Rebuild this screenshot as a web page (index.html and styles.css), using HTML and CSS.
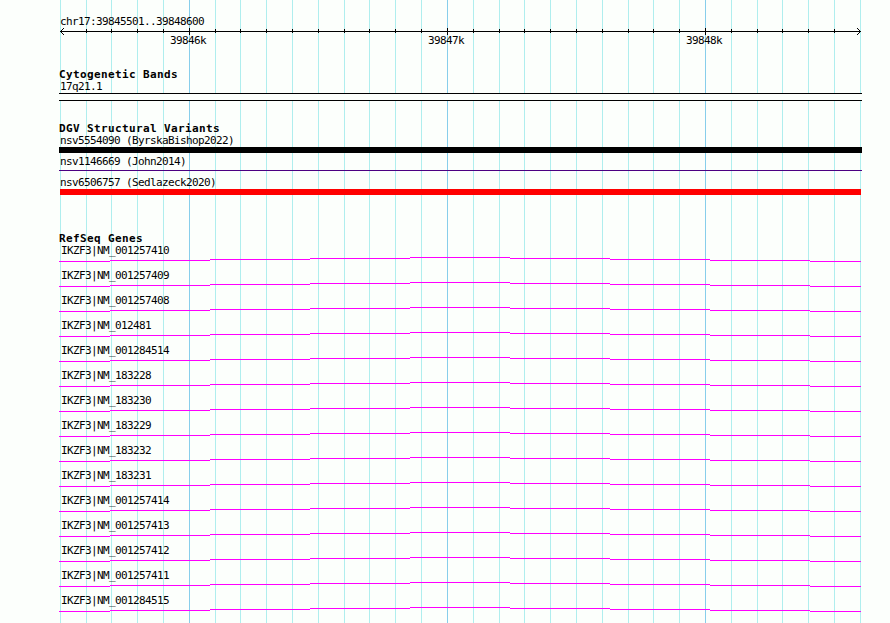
FILE: index.html
```html
<!DOCTYPE html>
<html lang="en">
<head>
<meta charset="UTF-8" />
<title>chr17:39845501..39848600</title>
<link rel="stylesheet" href="styles.css">
</head>
<body>

<svg class="grid" id="grid" width="890" height="623"></svg>

<main class="browser">
  <header class="ruler">
    <div class="label">chr17:39845501..39848600</div>
    <svg class="axis" id="axis" width="831" height="20"></svg>
  </header>

  <section class="track cytoband">
    <h2>Cytogenetic Bands</h2>
    <div class="label">17q21.1</div>
    <div class="band"></div>
  </section>

  <section class="track variants">
    <h2>DGV Structural Variants</h2>
    <div class="variant">
      <div class="label">nsv5554090 (ByrskaBishop2022)</div>
      <div class="bar black"></div>
    </div>
    <div class="variant">
      <div class="label">nsv1146669 (John2014)</div>
      <div class="bar thin"></div>
    </div>
    <div class="variant">
      <div class="label">nsv6506757 (Sedlazeck2020)</div>
      <div class="bar red"></div>
    </div>
  </section>

  <section class="track">
    <h2>RefSeq Genes</h2>
    <div id="genes"></div>
  </section>
</main>

<script>
  const genes = [
    'NM_001257410', 'NM_001257409', 'NM_001257408', 'NM_012481', 'NM_001284514',
    'NM_183228', 'NM_183230', 'NM_183229', 'NM_183232', 'NM_183231',
    'NM_001257414', 'NM_001257413', 'NM_001257412', 'NM_001257411', 'NM_001284515'
  ];
  const majors = { 5: '39846k', 15: '39847k', 25: '39848k' };

  // one line every 100 bp
  let grid = '';
  let axis = '<path class="ink" d="M1 4h801v1H1z"/>';
  for (let i = 0; i <= 31; i++) {
    const x = Math.floor(60.3 + i * 800 / 31);
    const major = majors[i];
    grid += `<rect class="${major ? 'major' : 'minor'}" x="${x}" y="0" width="1" height="623"/>`;
    if (major) {
      axis += `<rect class="ink" x="${x - 59}" y="1" width="1" height="7"/>`;
      axis += `<text class="tick-label" x="${x - 78}" y="17">${major}</text>`;
    } else if (i > 0 && i < 31) {
      axis += `<rect class="ink" x="${x - 59}" y="2" width="1" height="4"/>`;
    }
  }
  // arrow heads
  for (let i = 1; i <= 3; i++) {
    [4 - i, 4 + i].forEach(y => {
      axis += `<rect class="ink" x="${1 + i}" y="${y}" width="1" height="1"/>`;
      axis += `<rect class="ink" x="${801 - i}" y="${y}" width="1" height="1"/>`;
    });
  }
  document.getElementById('grid').innerHTML = grid;
  document.getElementById('axis').innerHTML = axis;

  // intron line rises to the middle and falls again
  const intron = `<svg class="intron" width="803" height="6">
    <path d="M0 5.5H51M51 4.5H151M151 3.5H251M251 2.5H351M351 1.5H451M451 2.5H551M551 3.5H651M651 4.5H751M751 5.5H802"/>
  </svg>`;
  document.getElementById('genes').innerHTML = genes.map(id => `
    <div class="gene">
      <div class="label">IKZF3|${id}</div>
      ${intron}
    </div>`).join('');
</script>

</body>
</html>
```
FILE: styles.css
```css
body {
  margin: 0;
  height: 623px;
  overflow: hidden;
  background-color: #fcfffc;
  color: #000;
  font-family: 'DejaVu Sans Mono', monospace;
  font-size: 11px;
  line-height: 14px;
}

/* guide lines run behind all the tracks */
.grid {
  position: absolute;
  top: 0;
  left: 0;
  z-index: -1;
  shape-rendering: crispEdges;
}

.minor {
  fill: #afeeee;
}

.major {
  fill: #87ceeb;
}

.browser {
  padding: 15px 0 0 59px;
}

.label {
  height: 12px;
  padding-left: 1px;
  letter-spacing: -0.622px;
  white-space: pre;
}

.ruler {
  height: 53px;
}

.axis {
  display: block;
  overflow: visible;
  shape-rendering: crispEdges;
}

.ink {
  fill: #000;
}

.tick-label {
  letter-spacing: -0.622px;
}

.track h2 {
  margin: 0;
  height: 12px;
  font-size: 11px;
  line-height: 14px;
  font-weight: bold;
  letter-spacing: 0.378px;
}

.cytoband {
  height: 54px;
}

.band {
  box-sizing: border-box;
  width: 803px;
  height: 8px;
  margin-top: 1px;
  border-top: 1px solid #000;
  border-bottom: 1px solid #000;
  background-color: #fcfffc;
}

.variants {
  height: 110px;
}

.variant {
  height: 21px;
}

.bar {
  width: 803px;
  height: 6px;
  margin-top: 1px;
}

.black {
  background-color: #000;
}

.thin {
  height: 1px;
  margin-top: 3px;
  background-color: #4b0082;
}

.red {
  width: 801px;
  margin-left: 1px;
  background-color: #f00;
}

.gene {
  height: 25px;
}

.gene .label {
  padding-left: 2px;
}

.intron {
  display: block;
  shape-rendering: crispEdges;
}

.intron path {
  fill: none;
  stroke: #f0f;
  stroke-width: 1;
}
```
